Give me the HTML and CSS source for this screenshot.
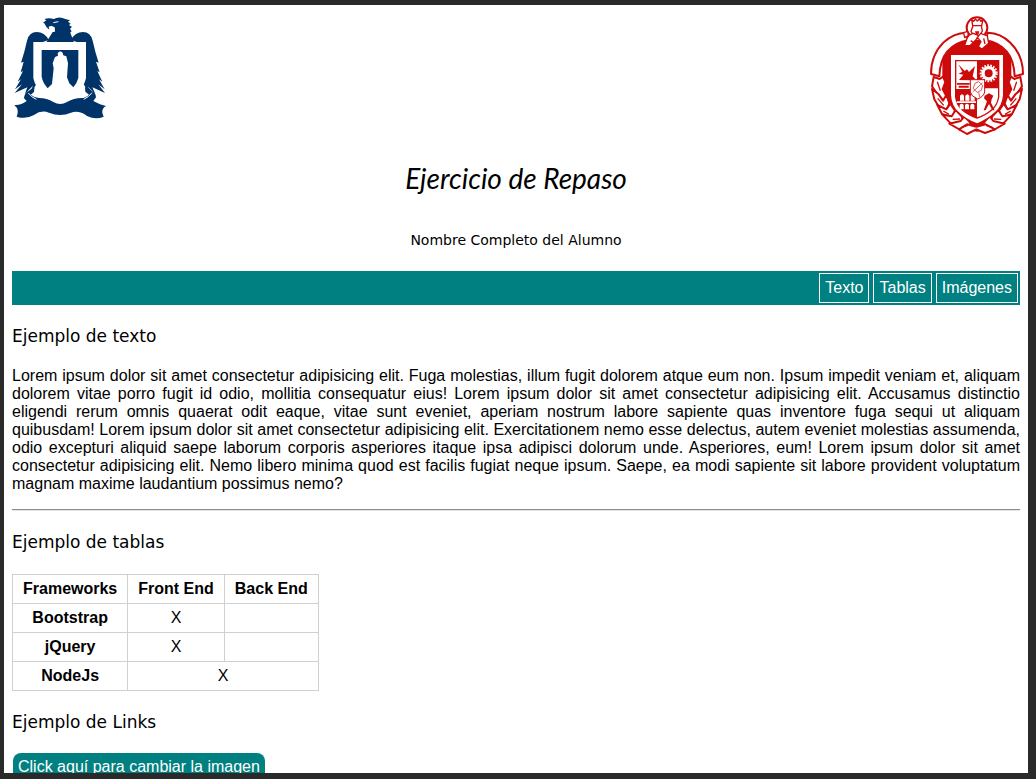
FILE: index.html
```html
<!DOCTYPE html>
<html lang="es">
<head>
<meta charset="utf-8">
<title>Ejercicio de Repaso</title>
<link rel="stylesheet" href="styles.css">
</head>
<body>
<div class="page">
  <header class="header">
    <svg class="logo-left" viewBox="39 39 288 321" role="img" aria-label="Escudo con águila">
      <g fill="#003468">
        <path d="M132 68L142 61L136 57Q151 52 164 57Q181 48 199 57L213 61L207 65L215 71L210 75L219 81L213 86L218 94L212 99L215 106Q190 119 161 111Q170 96 167 82L157 77L149 80L151 89Q140 81 136 70Z"/>
        <path d="M114 132V202Q116 228 130 248L118 243L98 275L102 257L78 281L85 262L47 279L69 253L48 268L66 238L56 245L72 213L65 217L74 185L66 188Q76 159 84 122Q90 96 113 96Q137 96 149 120L114 132Z"/>
        <path d="M251 132V202Q249 228 235 248L248 243L268 275L264 257L289 281L280 262L318 279L298 253L317 268L300 238L310 245L295 213L302 217L291 185L299 188Q289 159 281 122Q275 96 252 96Q228 96 216 120Z"/>
        <path d="M140 130L161 96H213L226 130Z"/>
        <path d="M103 252Q109 265 105 276L95 284Q106 293 120 294Q144 294 163 306Q184 318 204 306Q225 294 247 294Q260 294 270 284L259 275Q256 263 263 252Q268 266 278 272Q290 276 291 292L283 303L303 313L321 318Q308 325 310 339L314 350Q290 360 264 348Q240 330 216 338Q184 352 150 338Q127 329 105 345Q80 359 53 350Q59 335 54 324L46 315Q65 317 83 303L75 295Q77 276 90 272Q101 267 103 252Z"/>
      </g>
      <path fill="#fff" d="M103 126H261V235Q254 266 226 286Q202 304 184 306Q162 302 139 286Q109 265 103 235Z"/>
      <path fill="#003468" d="M128 150H238V234Q234 250 223 262L211 250L204 232L207 190L202 169L193 166L190 157L183 154L176 159L177 167L168 171L161 190L164 205L159 252L146 265Q131 247 128 230Z"/>
      <g fill="none" stroke="#fff" stroke-width="3"><path d="M163 68L178 65M88 279Q97 292 112 298M279 278Q269 292 254 298"/></g>
    </svg>
    <svg class="logo-right" viewBox="36 39 291 375" role="img" aria-label="Escudo municipal">
      <g fill="#cd0b0b" stroke="#cd0b0b" stroke-width="6" stroke-linejoin="round">
        <path d="M102 139L150 122L215 122L264 139L283 180V320L235 380L183 392L130 380L82 320V180Z"/>
        <path fill="#fff" d="M45 222Q45 165 82 128Q112 99 151 98L156 121Q119 127 94 154Q72 180 70 229Z"/>
        <path fill="#fff" d="M321 222Q321 165 283 128Q254 99 215 98L210 121Q247 127 272 154Q294 180 296 229Z"/>
        <circle cx="183" cy="83" r="31" fill="#fff"/>
        <g fill="#fff">
          <path d="M53 231L71 237L81 230L88 246L80 267L92 290L81 301L61 278L48 259Z"/>
          <path d="M313 231L295 237L285 230L278 246L286 267L274 290L285 301L305 278L318 259Z"/>
          <path d="M48 267L68 283L81 302L91 285L100 310L91 332L67 318L55 298Z"/>
          <path d="M318 267L298 283L285 302L275 285L266 310L275 332L299 318L311 298Z"/>
          <path d="M64 315L91 328L103 311L117 332L110 352L78 342Z"/>
          <path d="M302 315L275 328L263 311L249 332L256 352L288 342Z"/>
          <path d="M79 344L107 349L119 330L137 349L143 366L104 370Z"/>
          <path d="M287 344L259 349L247 330L229 349L223 366L262 370Z"/>
          <path d="M100 371L134 363L145 349L160 365L170 383L133 390Z"/>
          <path d="M266 371L232 363L221 349L206 365L196 383L233 390Z"/>
          <path d="M129 388L153 373L181 380L209 373L237 388L207 399L181 388L153 402Z"/>
        </g>
      </g>
      <path d="M103 163H263V285Q260 318 239 337Q215 360 183 372Q149 360 126 337Q105 318 103 285Z" fill="#fff" stroke="#cd0b0b" stroke-width="4"/>
      <path d="M119 182H248V291Q244 316 226 331Q207 347 183 354Q159 347 140 331Q122 316 119 291Z" fill="#fff" stroke="#cd0b0b" stroke-width="4"/>
      <g fill="#cd0b0b">
        <path d="M183 182H248V265H183ZM119 267H183V354Q159 347 140 331Q122 316 119 291Z"/>
        <path d="M127 193L146 213L153 208L159 216L177 198L170 229L178 237L160 241L129 240L142 224L128 221L139 215Z"/>
        <path d="M123 249H161V254H123ZM128 257H158V263H128Z"/>
        <path d="M206 287L219 280L232 287L227 298L225 308L236 331H229L219 312L209 331H203L213 304L204 295Z"/>
      </g>
      <circle cx="218" cy="220" r="17" fill="none" stroke="#fff" stroke-width="10"/>
      <circle cx="218" cy="220" r="24" fill="none" stroke="#fff" stroke-width="6" stroke-dasharray="5 4"/>
      <path d="M132 302V287Q138 278 144 287V302ZM148 302V287Q154 278 160 287V302ZM164 302V287Q170 278 176 287V302ZM131 328V315Q137 307 143 315V328ZM147 328V315Q153 307 159 315V328ZM163 328V315Q169 307 175 315V328ZM122 304H180V309H122Z" fill="#fff"/>
      <path d="M163 239H206V276Q203 290 185 297Q165 289 163 276Z" fill="#fff" stroke="#cd0b0b" stroke-width="3"/>
      <path d="M178 249L188 245L200 256L196 271L184 277L171 265ZM170 276L199 249M188 277L191 291" fill="none" stroke="#cd0b0b" stroke-width="2"/>
      <g fill="#fff" stroke="#cd0b0b" stroke-width="4" stroke-linejoin="round">
        <path d="M167 59L173 64L178 57L184 63L190 57L195 64L201 59L197 77H170Z"/>
        <path d="M171 77H196L199 93L190 108H174L165 94Z"/>
        <path d="M172 100Q157 103 152 118L146 136L162 137L180 119L188 107ZM194 100L214 108L218 130L206 140L197 148L187 139L195 125L184 112Z"/>
        <path d="M143 98L155 94L157 107L146 113Z"/>
      </g>
      <g fill="none" stroke="#cd0b0b" stroke-width="4">
        <path d="M64 245L73 272M302 245L293 272M65 295L83 316M301 295L283 316M82 333L99 343M284 333L267 343M110 358L132 357M256 358L234 357M137 382L156 376M229 382L210 376M164 122L174 129M203 115L207 132"/>
      </g>
      <path d="M177 94H190L187 104H180Z" fill="#cd0b0b"/>
    </svg>
  </header>
  <main class="content">
    <h1 class="title">Ejercicio de Repaso</h1>
    <h2 class="student">Nombre Completo del Alumno</h2>
    <nav class="menu">
      <a class="menu-link" href="#texto">Texto</a>
      <a class="menu-link" href="#tablas">Tablas</a>
      <a class="menu-link" href="#links">Imágenes</a>
    </nav>
    <h3 class="section-title" id="texto">Ejemplo de texto</h3>
    <p class="text">Lorem ipsum dolor sit amet consectetur adipisicing elit. Fuga molestias, illum fugit dolorem atque eum non. Ipsum impedit veniam et, aliquam dolorem vitae porro fugit id odio, mollitia consequatur eius! Lorem ipsum dolor sit amet consectetur adipisicing elit. Accusamus distinctio eligendi rerum omnis quaerat odit eaque, vitae sunt eveniet, aperiam nostrum labore sapiente quas inventore fuga sequi ut aliquam quibusdam! Lorem ipsum dolor sit amet consectetur adipisicing elit. Exercitationem nemo esse delectus, autem eveniet molestias assumenda, odio excepturi aliquid saepe laborum corporis asperiores itaque ipsa adipisci dolorum unde. Asperiores, eum! Lorem ipsum dolor sit amet consectetur adipisicing elit. Nemo libero minima quod est facilis fugiat neque ipsum. Saepe, ea modi sapiente sit labore provident voluptatum magnam maxime laudantium possimus nemo?</p>
    <hr class="rule">
    <h3 class="section-title" id="tablas">Ejemplo de tablas</h3>
    <table class="table">
      <thead>
        <tr><th scope="col">Frameworks</th><th scope="col">Front End</th><th scope="col">Back End</th></tr>
      </thead>
      <tbody>
        <tr><th scope="row">Bootstrap</th><td>X</td><td></td></tr>
        <tr><th scope="row">jQuery</th><td>X</td><td></td></tr>
        <tr><th scope="row">NodeJs</th><td colspan="2">X</td></tr>
      </tbody>
    </table>
    <h3 class="section-title" id="links">Ejemplo de Links</h3>
    <a class="button" href="#links">Click aquí para cambiar la imagen</a>
  </main>
</div>
</body>
</html>
```

FILE: styles.css
```css
* {
  box-sizing: border-box;
}

body {
  display: flex;
  height: 100vh;
  margin: 0;
  padding: 5px 8px 6px 4px;
  background: #2a2a2a;
  color: #000;
  font: 16px/18px "Liberation Sans", Arial, sans-serif;
}

.page {
  flex: 1;
  min-width: 0;
  overflow: hidden;
  background: #fff;
}

.header {
  display: flex;
  justify-content: space-between;
  align-items: flex-start;
  padding: 8px 3px 0 8px;
}

.logo-left {
  width: 96px;
}

.logo-right {
  width: 97px;
}

.content {
  padding: 0 8px;
}

.title {
  margin: 16px 0 29px;
  font: italic 28px/48px Lato, "Liberation Sans", sans-serif;
  text-align: center;
}

.student {
  margin: 0 0 22px;
  font: 14px/18px "DejaVu Sans", sans-serif;
  text-align: center;
}

.menu {
  display: flex;
  justify-content: flex-end;
  gap: 4px;
  padding: 2px;
  background: #008080;
}

.menu-link {
  padding: 5px;
  border: 1px solid #fff;
  color: #fff;
  text-decoration: none;
}

.section-title {
  margin: 20px 0;
  font: 17px/22px "DejaVu Sans", sans-serif;
}

.text {
  margin: 0 0 16px;
  text-align: justify;
}

.rule {
  margin: 0;
  border: 0;
  border-top: 1px solid #8c8c8c;
  border-bottom: 1px solid #e4e4e4;
}

.table {
  margin-top: 21px;
  border-collapse: collapse;
  text-align: center;
}

.table th,
.table td {
  padding: 5px 10px;
  border: 1px solid #d0d0d0;
}

.button {
  display: inline-block;
  margin-left: 1px;
  padding: 5px;
  border-radius: 8px;
  background: #008080;
  color: #fff;
  text-decoration: none;
}
```
